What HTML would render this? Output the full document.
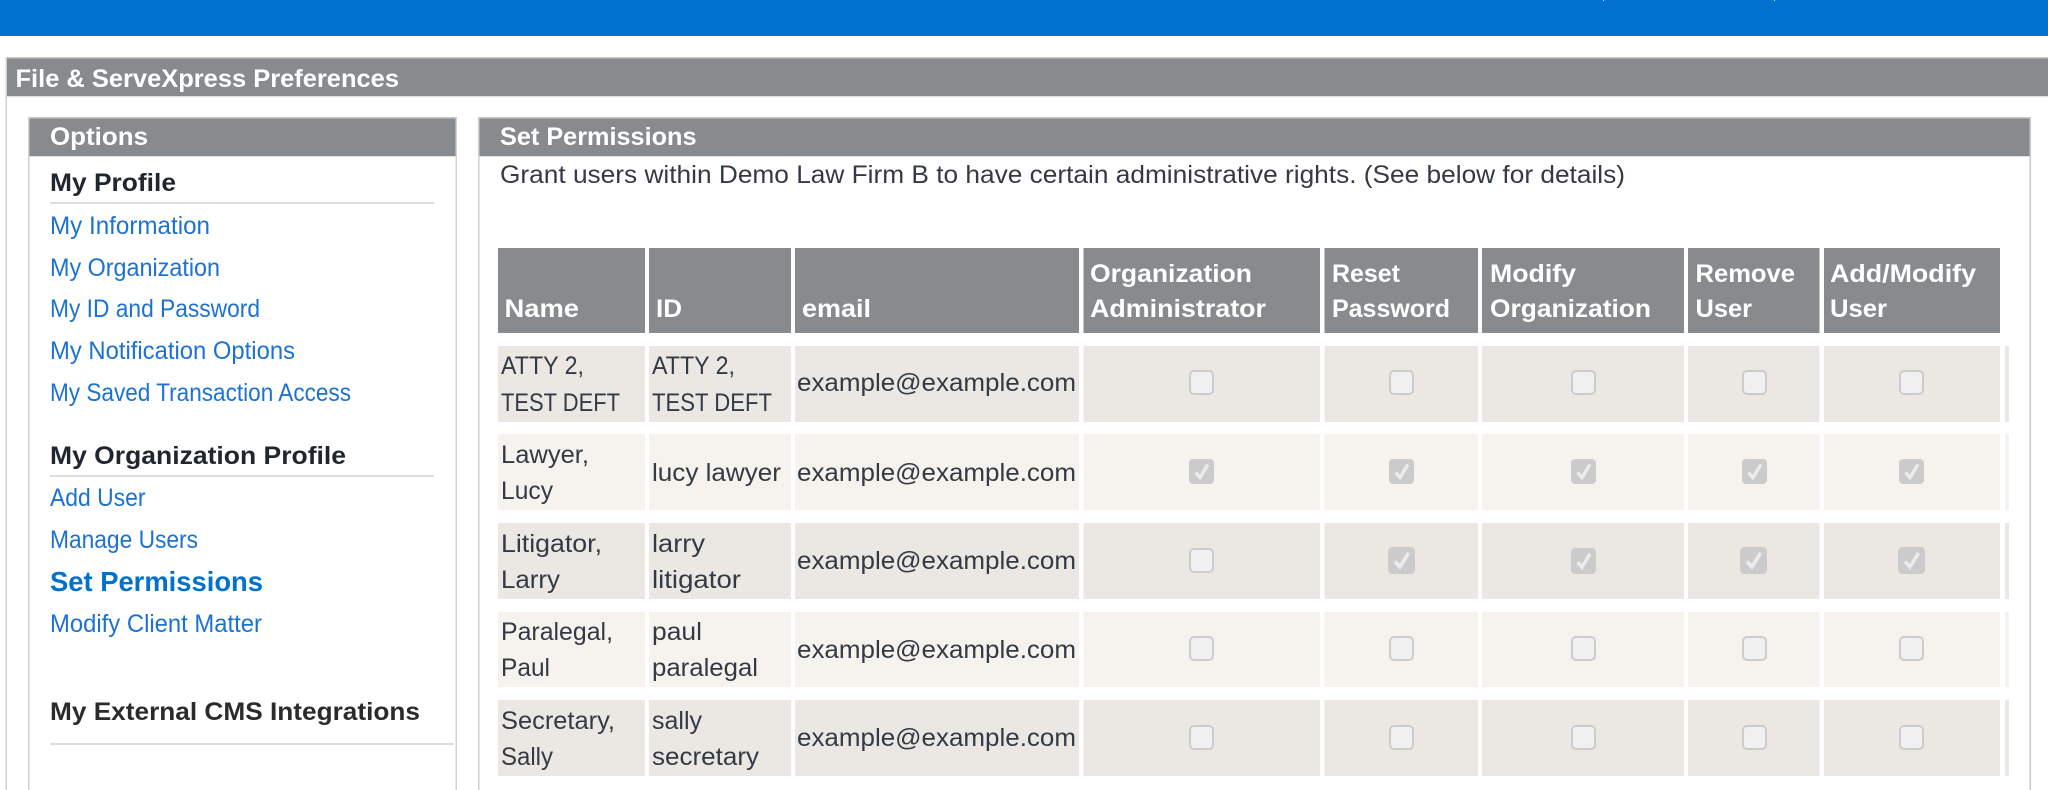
<!DOCTYPE html>
<html><head><meta charset="utf-8"><title>File &amp; ServeXpress Preferences</title>
<style>
html,body{margin:0;padding:0;background:#fff;width:2048px;height:790px;overflow:hidden}
svg{display:block;filter:blur(.35px)}
text{font-family:"Liberation Sans",sans-serif;font-size:25px}
.h{font-weight:700;fill:#fff}
.t{fill:#333a44}
.l{fill:#1c72d1}
.b{font-weight:700;fill:#1f2630}
</style></head><body>
<svg width="2048" height="790" viewBox="0 0 2048 790" xmlns="http://www.w3.org/2000/svg">
<defs>
<g id="u"><rect x="1" y="1" width="23" height="23" rx="4" fill="#f0f0f0" stroke="#cccccc" stroke-width="2"/></g>
<g id="c"><rect x="0" y="0" width="25" height="25" rx="4" fill="#cbcbcb"/><path d="M6.5 13.5L11 18.5L19 5.5" fill="none" stroke="#ececec" stroke-width="3.4"/></g>
</defs>
<rect width="2048" height="36" fill="#0071ce"/>
<rect x="1603" y="0" width="1" height="1" fill="#cfe3f5"/><rect x="1774" y="0" width="1" height="1" fill="#cfe3f5"/>

<!-- outer panel -->
<rect x="5.5" y="57" width="1.5" height="733" fill="#d2d2d2"/>
<rect x="5.5" y="57" width="2042.5" height="1.5" fill="#c8c8c8"/>
<rect x="7" y="58.5" width="2041" height="37.5" fill="#888b8d"/>
<rect x="7" y="96" width="2041" height="1" fill="#e0e0e0"/>
<text class="h" x="15.5" y="87" textLength="383.5" lengthAdjust="spacingAndGlyphs">File &amp; ServeXpress Preferences</text>

<!-- options panel -->
<rect x="28" y="117" width="1.5" height="673" fill="#d2d2d2"/>
<rect x="455.5" y="117" width="1.5" height="673" fill="#d2d2d2"/>
<rect x="28" y="117" width="429" height="1.5" fill="#c8c8c8"/>
<rect x="29.5" y="118.5" width="426" height="37.5" fill="#888b8d"/>
<rect x="29.5" y="156" width="426" height="1" fill="#e0e0e0"/>
<text class="h" x="50" y="145" textLength="98" lengthAdjust="spacingAndGlyphs">Options</text>
<text class="b" x="50" y="191" textLength="126" lengthAdjust="spacingAndGlyphs">My Profile</text>
<rect x="50" y="202" width="384" height="2" fill="#dedede"/>
<text class="l" x="50" y="234" textLength="160" lengthAdjust="spacingAndGlyphs">My Information</text>
<text class="l" x="50" y="276" textLength="170" lengthAdjust="spacingAndGlyphs">My Organization</text>
<text class="l" x="50" y="317" textLength="210" lengthAdjust="spacingAndGlyphs">My ID and Password</text>
<text class="l" x="50" y="359" textLength="245" lengthAdjust="spacingAndGlyphs">My Notification Options</text>
<text class="l" x="50" y="401" textLength="301" lengthAdjust="spacingAndGlyphs">My Saved Transaction Access</text>
<text class="b" x="50" y="464" textLength="296" lengthAdjust="spacingAndGlyphs">My Organization Profile</text>
<rect x="50" y="475" width="384" height="2" fill="#dedede"/>
<text class="l" x="50" y="506" textLength="95.5" lengthAdjust="spacingAndGlyphs">Add User</text>
<text class="l" x="50" y="548" textLength="148" lengthAdjust="spacingAndGlyphs">Manage Users</text>
<text x="50" y="591" textLength="213" lengthAdjust="spacingAndGlyphs" style="font-size:28px;font-weight:700;fill:#0071ce">Set Permissions</text>
<text class="l" x="50" y="632" textLength="212" lengthAdjust="spacingAndGlyphs">Modify Client Matter</text>
<text class="b" x="50" y="720" textLength="370" lengthAdjust="spacingAndGlyphs" style="fill:#2b2b2b">My External CMS Integrations</text>
<rect x="50" y="743" width="404" height="2" fill="#dedede"/>

<!-- permissions panel -->
<rect x="478" y="117" width="1.5" height="673" fill="#d2d2d2"/>
<rect x="2029.5" y="117" width="1.5" height="673" fill="#c8c8c8"/>
<rect x="478" y="117" width="1553" height="1.5" fill="#c8c8c8"/>
<rect x="479.5" y="118.5" width="1550" height="37.5" fill="#888b8d"/>
<rect x="479.5" y="156" width="1550" height="1" fill="#e0e0e0"/>
<text class="h" x="500" y="145" textLength="196.5" lengthAdjust="spacingAndGlyphs">Set Permissions</text>
<text class="t" x="500" y="183" textLength="1125" lengthAdjust="spacingAndGlyphs">Grant users within Demo Law Firm B to have certain administrative rights. (See below for details)</text>

<!-- table head -->
<g fill="#888b8d">
<rect x="498" y="248" width="147" height="85"/><rect x="649" y="248" width="142" height="85"/><rect x="795" y="248" width="284" height="85"/><rect x="1083.5" y="248" width="236.5" height="85"/><rect x="1324.5" y="248" width="153.5" height="85"/><rect x="1482" y="248" width="202" height="85"/><rect x="1688" y="248" width="131.5" height="85"/><rect x="1824" y="248" width="176" height="85"/>
</g>
<text class="h" x="504.5" y="317" textLength="74.5" lengthAdjust="spacingAndGlyphs">Name</text>
<text class="h" x="656" y="317" textLength="26" lengthAdjust="spacingAndGlyphs">ID</text>
<text class="h" x="802" y="317" textLength="69" lengthAdjust="spacingAndGlyphs">email</text>
<text class="h" x="1090" y="282" textLength="162" lengthAdjust="spacingAndGlyphs">Organization</text>
<text class="h" x="1090" y="317" textLength="176" lengthAdjust="spacingAndGlyphs">Administrator</text>
<text class="h" x="1332" y="282" textLength="68" lengthAdjust="spacingAndGlyphs">Reset</text>
<text class="h" x="1332" y="317" textLength="118" lengthAdjust="spacingAndGlyphs">Password</text>
<text class="h" x="1490" y="282" textLength="86" lengthAdjust="spacingAndGlyphs">Modify</text>
<text class="h" x="1490" y="317" textLength="161" lengthAdjust="spacingAndGlyphs">Organization</text>
<text class="h" x="1695.5" y="282" textLength="99.5" lengthAdjust="spacingAndGlyphs">Remove</text>
<text class="h" x="1695.5" y="317" textLength="56.5" lengthAdjust="spacingAndGlyphs">User</text>
<text class="h" x="1830" y="282" textLength="146" lengthAdjust="spacingAndGlyphs">Add/Modify</text>
<text class="h" x="1830" y="317" textLength="57" lengthAdjust="spacingAndGlyphs">User</text>

<!-- row backgrounds -->
<g fill="#ebe8e3">
<rect x="498" y="346" width="147" height="76"/><rect x="649" y="346" width="142" height="76"/><rect x="795" y="346" width="284" height="76"/><rect x="1083.5" y="346" width="236.5" height="76"/><rect x="1324.5" y="346" width="153.5" height="76"/><rect x="1482" y="346" width="202" height="76"/><rect x="1688" y="346" width="131.5" height="76"/><rect x="1824" y="346" width="176" height="76"/><rect x="2005" y="346" width="4" height="76"/>
<rect x="498" y="523" width="147" height="76"/><rect x="649" y="523" width="142" height="76"/><rect x="795" y="523" width="284" height="76"/><rect x="1083.5" y="523" width="236.5" height="76"/><rect x="1324.5" y="523" width="153.5" height="76"/><rect x="1482" y="523" width="202" height="76"/><rect x="1688" y="523" width="131.5" height="76"/><rect x="1824" y="523" width="176" height="76"/><rect x="2005" y="523" width="4" height="76"/>
<rect x="498" y="700" width="147" height="76"/><rect x="649" y="700" width="142" height="76"/><rect x="795" y="700" width="284" height="76"/><rect x="1083.5" y="700" width="236.5" height="76"/><rect x="1324.5" y="700" width="153.5" height="76"/><rect x="1482" y="700" width="202" height="76"/><rect x="1688" y="700" width="131.5" height="76"/><rect x="1824" y="700" width="176" height="76"/><rect x="2005" y="700" width="4" height="76"/>
</g>
<g fill="#f6f3ee">
<rect x="498" y="434" width="147" height="76"/><rect x="649" y="434" width="142" height="76"/><rect x="795" y="434" width="284" height="76"/><rect x="1083.5" y="434" width="236.5" height="76"/><rect x="1324.5" y="434" width="153.5" height="76"/><rect x="1482" y="434" width="202" height="76"/><rect x="1688" y="434" width="131.5" height="76"/><rect x="1824" y="434" width="176" height="76"/><rect x="2005" y="434" width="4" height="76"/>
<rect x="498" y="612" width="147" height="75"/><rect x="649" y="612" width="142" height="75"/><rect x="795" y="612" width="284" height="75"/><rect x="1083.5" y="612" width="236.5" height="75"/><rect x="1324.5" y="612" width="153.5" height="75"/><rect x="1482" y="612" width="202" height="75"/><rect x="1688" y="612" width="131.5" height="75"/><rect x="1824" y="612" width="176" height="75"/><rect x="2005" y="612" width="4" height="75"/>
</g>

<!-- table body text -->
<text class="t" x="501" y="374" textLength="83" lengthAdjust="spacingAndGlyphs">ATTY 2,</text>
<text class="t" x="501" y="411" textLength="119" lengthAdjust="spacingAndGlyphs">TEST DEFT</text>
<text class="t" x="652" y="374" textLength="83" lengthAdjust="spacingAndGlyphs">ATTY 2,</text>
<text class="t" x="652" y="411" textLength="120" lengthAdjust="spacingAndGlyphs">TEST DEFT</text>
<text class="t" x="797" y="391" textLength="279" lengthAdjust="spacingAndGlyphs">example@example.com</text>

<text class="t" x="501" y="463" textLength="88" lengthAdjust="spacingAndGlyphs">Lawyer,</text>
<text class="t" x="501" y="499" textLength="52" lengthAdjust="spacingAndGlyphs">Lucy</text>
<text class="t" x="652" y="481" textLength="129" lengthAdjust="spacingAndGlyphs">lucy lawyer</text>
<text class="t" x="797" y="481" textLength="279" lengthAdjust="spacingAndGlyphs">example@example.com</text>

<text class="t" x="501" y="552" textLength="101" lengthAdjust="spacingAndGlyphs">Litigator,</text>
<text class="t" x="501" y="588" textLength="59" lengthAdjust="spacingAndGlyphs">Larry</text>
<text class="t" x="652" y="552" textLength="53" lengthAdjust="spacingAndGlyphs">larry</text>
<text class="t" x="652" y="588" textLength="89" lengthAdjust="spacingAndGlyphs">litigator</text>
<text class="t" x="797" y="569" textLength="279" lengthAdjust="spacingAndGlyphs">example@example.com</text>

<text class="t" x="501" y="640" textLength="112" lengthAdjust="spacingAndGlyphs">Paralegal,</text>
<text class="t" x="501" y="676" textLength="49" lengthAdjust="spacingAndGlyphs">Paul</text>
<text class="t" x="652" y="640" textLength="50" lengthAdjust="spacingAndGlyphs">paul</text>
<text class="t" x="652" y="676" textLength="106" lengthAdjust="spacingAndGlyphs">paralegal</text>
<text class="t" x="797" y="658" textLength="279" lengthAdjust="spacingAndGlyphs">example@example.com</text>

<text class="t" x="501" y="729" textLength="114" lengthAdjust="spacingAndGlyphs">Secretary,</text>
<text class="t" x="501" y="765" textLength="52" lengthAdjust="spacingAndGlyphs">Sally</text>
<text class="t" x="652" y="729" textLength="50" lengthAdjust="spacingAndGlyphs">sally</text>
<text class="t" x="652" y="765" textLength="107" lengthAdjust="spacingAndGlyphs">secretary</text>
<text class="t" x="797" y="746" textLength="279" lengthAdjust="spacingAndGlyphs">example@example.com</text>

<!-- checkboxes -->
<use href="#u" x="1189" y="370"/><use href="#u" x="1389" y="370"/><use href="#u" x="1571" y="370"/><use href="#u" x="1742" y="370"/><use href="#u" x="1899" y="370"/>
<use href="#c" x="1189" y="459"/><use href="#c" x="1389" y="459"/><use href="#c" x="1571" y="459"/><use href="#c" x="1742" y="459"/><use href="#c" x="1899" y="459"/>
<use href="#u" x="1189" y="548"/>
<use href="#c" transform="translate(1388 547) scale(1.08)"/>
<use href="#c" transform="translate(1571 548) scale(1 1.04)"/>
<use href="#c" transform="translate(1740 547) scale(1.08)"/>
<use href="#c" transform="translate(1898 547) scale(1.08)"/>
<use href="#u" x="1189" y="636"/><use href="#u" x="1389" y="636"/><use href="#u" x="1571" y="636"/><use href="#u" x="1742" y="636"/><use href="#u" x="1899" y="636"/>
<use href="#u" x="1189" y="725"/><use href="#u" x="1389" y="725"/><use href="#u" x="1571" y="725"/><use href="#u" x="1742" y="725"/><use href="#u" x="1899" y="725"/>
</svg>
</body></html>
